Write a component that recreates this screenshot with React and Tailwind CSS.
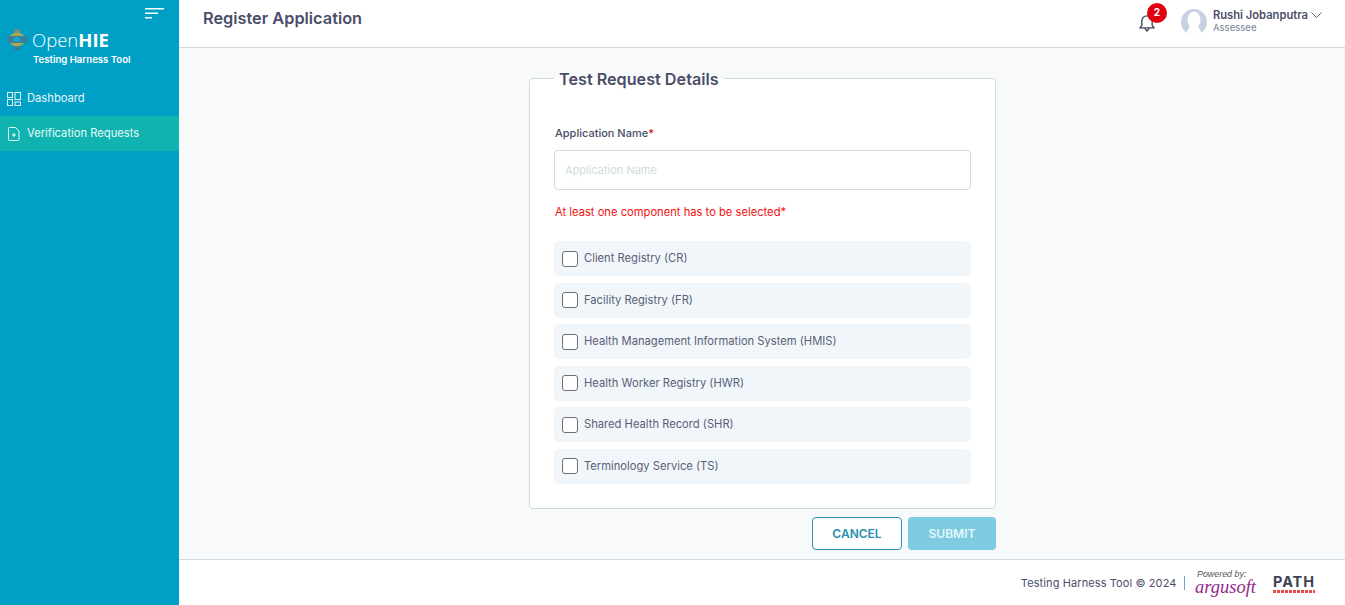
const components = [
  'Client Registry (CR)',
  'Facility Registry (FR)',
  'Health Management Information System (HMIS)',
  'Health Worker Registry (HWR)',
  'Shared Health Record (SHR)',
  'Terminology Service (TS)',
];

const Logo = () => (
  <svg width="20" height="21" viewBox="0 0 20 21" className="shrink-0">
    <rect x="7" y="0" width="6" height="4" fill="#6d8f7a" />
    <rect x="7" y="17" width="6" height="4" fill="#35808f" />
    <ellipse cx="10" cy="10.500" rx="8" ry="7" fill="#a9ab4f" />
    <rect x="0" y="7" width="20" height="7" fill="#3a7f9c" />
    <ellipse cx="10" cy="10.500" rx="3.500" ry="2.500" fill="#18a6cc" />
  </svg>
);

const DashboardIcon = () => (
  <svg width="14" height="14" viewBox="0 0 14 14" fill="none" stroke="#e6f7fb" strokeWidth="1">
    <rect x="0.500" y="0.500" width="5" height="5" />
    <rect x="8" y="0.500" width="5.500" height="7" />
    <rect x="0.500" y="7.500" width="5" height="6" />
    <rect x="8" y="10" width="5.500" height="3.500" />
  </svg>
);

const RequestIcon = () => (
  <svg width="12" height="14" viewBox="0 0 12 14" fill="none" stroke="#e6fbf8" strokeWidth="1">
    <path d="M1.500 0.500h6l3.500 3.500v8.500a1 1 0 0 1-1 1h-8.500a1 1 0 0 1-1-1v-11a1 1 0 0 1 1-1z" />
    <path d="M6 6v4M4 8h4" />
  </svg>
);

const MenuIcon = () => (
  <svg width="19" height="11" viewBox="0 0 19 11" fill="#ffffff">
    <rect x="0" y="0" width="19" height="1.500" />
    <rect x="0" y="4.500" width="13" height="1.500" />
    <rect x="0" y="9" width="7" height="1.500" />
  </svg>
);

const BellIcon = () => (
  <svg width="16" height="18" viewBox="0 0 18 20" fill="none" stroke="#3d4256" strokeWidth="1.500">
    <path d="M1 15.500h16l-2.200-2.800v-5a5.800 5.800 0 0 0-11.600 0v5z" strokeLinejoin="round" />
    <path d="M6.500 16l2.500 3 2.500-3" />
  </svg>
);

const Chevron = () => (
  <svg width="11" height="6" viewBox="0 0 11 6" fill="none" stroke="#4a4e69" strokeWidth="0.900">
    <path d="M0.500 0.500l5 5 5-5" />
  </svg>
);

const Avatar = () => (
  <svg width="26" height="26" viewBox="0 0 26 26" className="rounded-full">
    <rect width="26" height="26" fill="#c6d2e3" />
    <ellipse cx="13" cy="11" rx="6.500" ry="8.500" fill="#ffffff" />
    <path d="M9 17h8l5 9H4z" fill="#ffffff" />
  </svg>
);

export default function App() {
  return (
    <div className="flex h-[605px] w-full overflow-hidden bg-[#f8f9fb] font-['Inter',sans-serif] text-[#4a4e69]">
      <aside className="w-[179px] shrink-0 bg-[#00a0c6] text-white">
        <div className="flex justify-end pt-[8px] pr-[15px]">
          <MenuIcon />
        </div>
        <div className="mt-[10px] flex items-center pl-[7px]">
          <Logo />
          <span className="ml-[5px] font-['Open_Sans',sans-serif] text-[18.500px] leading-[21px] font-light">
            Open<span className="font-bold">HIE</span>
          </span>
        </div>
        <p className="mt-[3px] pl-[33px] text-[9.600px] leading-[14px] font-semibold">Testing Harness Tool</p>
        <nav className="mt-[14px] flex flex-col text-[11.200px]">
          <div className="flex h-[35px] items-center gap-[6px] pl-[7px] text-[#e6f7fb]">
            <DashboardIcon />
            Dashboard
          </div>
          <div className="flex h-[35px] items-center gap-[7px] bg-[#10b3b0] pl-[8px] text-[#e6fbf8]">
            <RequestIcon />
            Verification Requests
          </div>
        </nav>
      </aside>

      <div className="flex min-w-0 flex-1 flex-col">
        <header className="flex h-[48px] shrink-0 items-start justify-between border-b border-[#d3dade] bg-white pr-[23px] pl-[24px]">
          <h1 className="pt-[7px] text-[16.320px] leading-[22px] font-semibold">Register Application</h1>
          <div className="flex items-center pt-[8px]">
            <div className="relative mr-[26px] h-[26px] w-[16px]">
              <span className="absolute top-[5px] left-0">
                <BellIcon />
              </span>
              <span className="absolute top-[-6px] left-[8px] flex h-[20px] w-[20px] items-center justify-center rounded-full bg-[#e0000f] text-[10px] font-bold text-white">
                2
              </span>
            </div>
            <Avatar />
            <div className="ml-[6px] pb-[1px]">
              <div className="flex items-center gap-[3px] text-[11.200px] leading-[14px] font-semibold">
                Rushi Jobanputra
                <Chevron />
              </div>
              <div className="text-[9.600px] leading-[12px] text-[#7a7f96]">Assessee</div>
            </div>
          </div>
        </header>

        <main className="flex flex-1 flex-col items-center overflow-hidden">
          <div className="mt-[18px] ml-[1px] w-[467px]">
            <fieldset className="h-[443px] rounded-[4px] border border-[#cddcdc] bg-white px-[24px] pt-[35px] pb-[24px]">
              <legend className="px-[5px] pt-[2px] text-[16.200px] leading-[22px] font-semibold">
                Test Request Details
              </legend>
              <label className="block pl-[1px] text-[11px] leading-[16px] font-medium">
                Application Name<span className="text-[#e00000]">*</span>
              </label>
              <input
                placeholder="Application Name"
                className="mt-[9px] h-[40px] w-full rounded-[4px] border border-[#cddcdc] bg-white px-[10px] text-[11px] outline-none placeholder:text-[#d0dce0]"
              />
              <p className="mt-[14px] pl-[1px] text-[11.200px] leading-[16px] text-[#f01010]">
                At least one component has to be selected*
              </p>
              <ul className="mt-[21px] flex flex-col gap-[6.500px]">
                {components.map((name) => (
                  <li key={name} className="flex h-[35px] items-center rounded-[5px] bg-[#f1f6fa] pl-[8px]">
                    <span className="h-[16px] w-[16px] rounded-[3px] border-[1.500px] border-[#6b6f78] bg-white" />
                    <span className="ml-[6px] text-[11.200px] text-[#5a5e78]">{name}</span>
                  </li>
                ))}
              </ul>
            </fieldset>
            <div className="mt-[8px] flex justify-end gap-[6px]">
              <button className="h-[33px] w-[90px] rounded-[4px] border border-[#2a8fb0] bg-white text-[12px] font-semibold text-[#2a8fb0]">
                CANCEL
              </button>
              <button className="h-[33px] w-[88px] rounded-[4px] bg-[#7dcce2] text-[12px] font-semibold text-[#e8f7fb]">
                SUBMIT
              </button>
            </div>
          </div>
        </main>

        <footer className="flex h-[46px] shrink-0 items-center justify-end border-t border-[#cddcdc] bg-white pr-[30px] text-[11px]">
          <span className="pt-[2px] tracking-[0.100px]">Testing Harness Tool © 2024</span>
          <span className="mx-[7px] mt-[1px] h-[14px] w-[1.500px] bg-[#6aa5d8]" />
          <div className="ml-[3px] flex w-[62px] flex-col items-start">
            <span className="pl-[2px] font-['Liberation_Sans',sans-serif] text-[8.900px] leading-[9px] text-[#555555] italic">Powered by:</span>
            <span className="mb-[1px] font-['Liberation_Serif',serif] text-[18.500px] leading-[16px] text-[#96288a] italic">argusoft</span>
          </div>
          <div className="ml-[16px] flex flex-col items-center pt-[3px]">
            <span className="text-[14.500px] leading-[14px] font-bold tracking-[0.900px] text-[#3d4256]">PATH</span>
            <span className="mt-[1px] h-[3px] w-[42px] bg-[repeating-linear-gradient(90deg,#e84a4a_0_3px,#ffffff_3px_4px)]" />
          </div>
        </footer>
      </div>
    </div>
  );
}
